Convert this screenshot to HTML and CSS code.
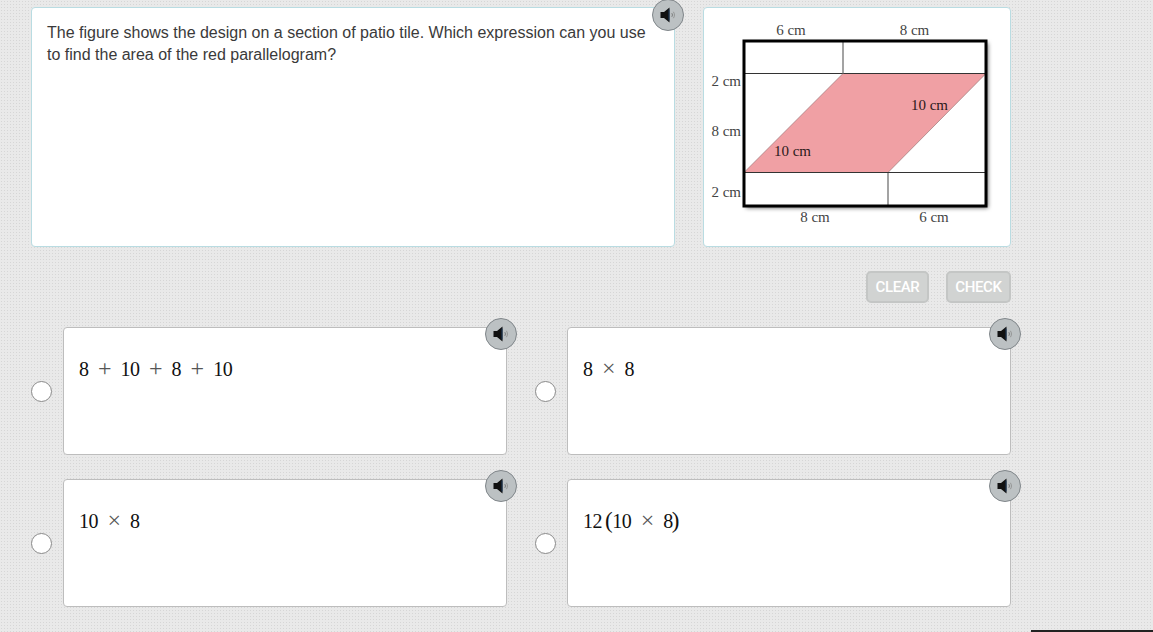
FILE: index.html
```html
<!DOCTYPE html>
<html lang="en">
<head>
    <meta charset="UTF-8">
    <meta name="viewport" content="width=device-width, initial-scale=1.0">
    <title>Patio Tile Question</title>
    <link rel="stylesheet" href="styles.css">
</head>
<body>
    <svg class="icon-defs" width="0" height="0">
        <symbol id="speaker" viewBox="0 0 20 20">
            <path d="M1.5 7H5L10.5 2.5V17.5L5 13H1.5Z" fill="#111"/>
            <path d="M10 4.5V15.5" stroke="#1d3a5c" stroke-width="1"/>
            <path d="M12.8 8.2C13.6 9.4 13.6 10.6 12.8 11.8" fill="none" stroke="#666" stroke-width=".8"/>
            <path d="M14.4 6.8C15.8 8.8 15.8 11.2 14.4 13.2" fill="none" stroke="#888" stroke-width=".8"/>
        </symbol>
    </svg>

    <div class="page">
        <div class="top-row">
            <div class="card question">
                <p>The figure shows the design on a section of patio tile. Which expression can you use to find the area of the red parallelogram?</p>
                <button class="audio audio-question"><svg><use href="#speaker"/></svg></button>
            </div>
            <div class="card figure">
                <svg class="tile" viewBox="0 0 306 238" width="306" height="238">
                    <rect class="tile-box" x="40" y="33" width="242" height="165"/>
                    <polygon class="tile-red" points="40,164.5 139,65.5 282,65.5 184,164.5"/>
                    <line class="tile-line" x1="40" y1="65.5" x2="282" y2="65.5"/>
                    <line class="tile-line" x1="40" y1="164.5" x2="282" y2="164.5"/>
                    <line class="tile-div" x1="139" y1="33" x2="139" y2="66"/>
                    <line class="tile-div" x1="184" y1="165" x2="184" y2="198"/>
                    <rect class="tile-frame" x="40" y="33" width="242" height="165"/>
                    <text x="87" y="27">6 cm</text>
                    <text x="210.5" y="27">8 cm</text>
                    <text class="side" x="37" y="78">2 cm</text>
                    <text class="side" x="37" y="128">8 cm</text>
                    <text class="side" x="37" y="189">2 cm</text>
                    <text x="111" y="214">8 cm</text>
                    <text x="230" y="214">6 cm</text>
                    <text class="dark" x="88.5" y="148">10 cm</text>
                    <text class="dark" x="225.5" y="102">10 cm</text>
                </svg>
            </div>
        </div>

        <div class="buttons">
            <button class="action">CLEAR</button>
            <button class="action">CHECK</button>
        </div>

        <div class="options">
            <div class="option">
                <span class="radio"></span>
                <div class="card answer">
                    <span class="math">8<i>+</i>10<i>+</i>8<i>+</i>10</span>
                    <button class="audio"><svg><use href="#speaker"/></svg></button>
                </div>
            </div>
            <div class="option">
                <span class="radio"></span>
                <div class="card answer">
                    <span class="math">8<i>×</i>8</span>
                    <button class="audio"><svg><use href="#speaker"/></svg></button>
                </div>
            </div>
            <div class="option">
                <span class="radio"></span>
                <div class="card answer">
                    <span class="math">10<i>×</i>8</span>
                    <button class="audio"><svg><use href="#speaker"/></svg></button>
                </div>
            </div>
            <div class="option">
                <span class="radio"></span>
                <div class="card answer">
                    <span class="math">12<b>(</b>10<i>×</i>8<b class="close">)</b></span>
                    <button class="audio"><svg><use href="#speaker"/></svg></button>
                </div>
            </div>
        </div>
    </div>

    <div class="corner-bar"></div>
</body>
</html>
```

FILE: styles.css
```css
html, body {
    height: 100%;
}
body {
    margin: 0;
    overflow: hidden;
    position: relative;
    font-family: "Liberation Sans", Arial, sans-serif;
    background-color: #e9e9e9;
    background-image: radial-gradient(#d6d6d6 1px, transparent 1px);
    background-size: 3px 3px;
}
.icon-defs {
    position: absolute;
}
.page {
    width: 980px;
    padding: 7px 0 0 31px;
}
.top-row {
    display: flex;
    gap: 28px;
}
.card {
    position: relative;
    box-sizing: border-box;
    background: #fff;
    border: 1px solid #b9dce2;
    border-radius: 4px;
}
.question {
    width: 644px;
    height: 240px;
    padding: 14px 15px;
}
.question p {
    margin: 0;
    font-size: 16px;
    line-height: 22px;
    color: #3a3a3a;
}
.figure {
    width: 308px;
    height: 240px;
}
.tile {
    display: block;
}
.tile text {
    font-family: "Liberation Serif", serif;
    font-size: 15px;
    fill: #444;
    text-anchor: middle;
}
.tile text.side {
    text-anchor: end;
}
.tile text.dark {
    fill: #2b1a1a;
}
.tile-box {
    fill: #fff;
    filter: drop-shadow(2px 2px 2px rgba(0, 0, 0, .6));
}
.tile-red {
    fill: #f0a0a4;
    stroke: #8d6a6a;
    stroke-width: .6;
}
.tile-line {
    stroke: #333;
    stroke-width: 1;
}
.tile-div {
    stroke: #666;
    stroke-width: 1.2;
}
.tile-frame {
    fill: none;
    stroke: #000;
    stroke-width: 3;
}
.buttons {
    display: flex;
    justify-content: flex-end;
    gap: 17px;
    margin-top: 24px;
}
.action {
    height: 32px;
    padding: 0 7.5px;
    font-family: Roboto, sans-serif;
    font-size: 15px;
    font-weight: 500;
    letter-spacing: -.4px;
    color: #fff;
    background: #d1d3d2;
    border: 2px solid #c4c6c5;
    border-radius: 5px;
}
.options {
    display: grid;
    grid-template-columns: 476px 476px;
    column-gap: 28px;
    row-gap: 24px;
    margin-top: 24px;
}
.option {
    display: flex;
    align-items: center;
    gap: 12px;
}
.radio {
    box-sizing: border-box;
    width: 21px;
    height: 21px;
    margin-right: -1px;
    background: #fff;
    border: 1px solid #8a8a8a;
    border-radius: 50%;
}
.answer {
    width: 444px;
    height: 128px;
    padding: 29px 15px;
    border-color: #bdbdbd;
}
.math {
    font-family: "Liberation Serif", serif;
    font-size: 20px;
    letter-spacing: -.5px;
    line-height: 24px;
    color: #111;
}
.math i {
    font-style: normal;
    font-size: 24px;
    line-height: 0;
    margin: 0 9.5px;
    color: #555;
}
.math b {
    font-weight: normal;
    font-size: 23px;
    line-height: 0;
    margin: 0 0 0 3px;
}
.math b.close {
    margin-left: -1px;
}
.audio {
    position: absolute;
    top: -10px;
    right: -11px;
    box-sizing: border-box;
    width: 32px;
    height: 32px;
    padding: 0 0 0 1px;
    display: flex;
    align-items: center;
    justify-content: center;
    background: #bcc1c3;
    border: 1px solid #80868a;
    border-radius: 50%;
}
.audio svg {
    width: 20px;
    height: 20px;
}
.audio-question {
    top: -9px;
    right: -10px;
}
.corner-bar {
    position: absolute;
    right: 0;
    bottom: 0;
    width: 122px;
    height: 2px;
    background: #222;
}
```
